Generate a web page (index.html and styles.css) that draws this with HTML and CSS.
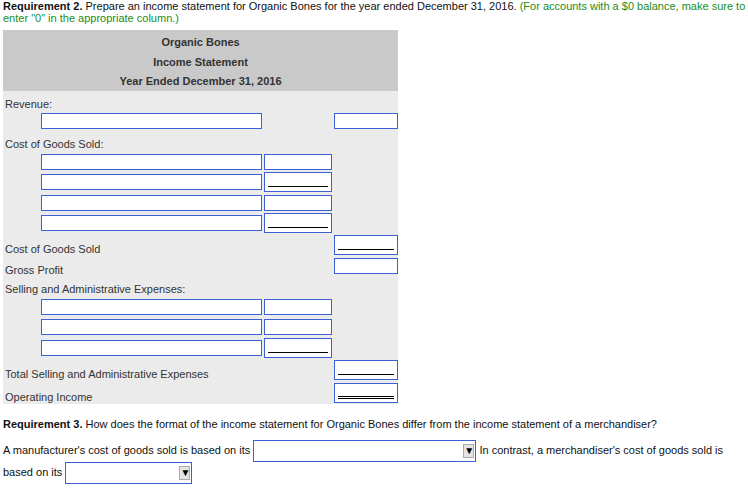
FILE: index.html
```html
<!DOCTYPE html>
<html lang="en">
<head>
    <meta charset="UTF-8">
    <title>Organic Bones - Income Statement</title>
    <link rel="stylesheet" href="styles.css">
</head>
<body>
    <p class="intro"><strong>Requirement 2.</strong> Prepare an income statement for Organic Bones for the year ended December 31, 2016. <span class="hint">(For accounts with a $0 balance, make sure to enter "0" in the appropriate column.)</span></p>

    <div class="statement">
        <div class="statement-head">
            <div>Organic Bones</div>
            <div>Income Statement</div>
            <div>Year Ended December 31, 2016</div>
        </div>
        <div class="statement-body">
            <div class="row label-row"><span class="label">Revenue:</span></div>
            <div class="row entry-row">
                <input class="field name">
                <span class="gap-col"></span>
                <input class="field total">
            </div>

            <div class="row label-row"><span class="label">Cost of Goods Sold:</span></div>
            <div class="row entry-row">
                <input class="field name">
                <input class="field amount">
            </div>
            <div class="row entry-row">
                <input class="field name">
                <input class="field amount underline">
            </div>
            <div class="row entry-row">
                <input class="field name">
                <input class="field amount">
            </div>
            <div class="row entry-row">
                <input class="field name">
                <input class="field amount underline">
            </div>
            <div class="row total-row">
                <span class="label">Cost of Goods Sold</span>
                <input class="field total underline">
            </div>
            <div class="row total-row plain">
                <span class="label">Gross Profit</span>
                <input class="field total">
            </div>

            <div class="row label-row"><span class="label">Selling and Administrative Expenses:</span></div>
            <div class="row entry-row">
                <input class="field name">
                <input class="field amount">
            </div>
            <div class="row entry-row">
                <input class="field name">
                <input class="field amount">
            </div>
            <div class="row entry-row">
                <input class="field name">
                <input class="field amount underline">
            </div>
            <div class="row total-row grand">
                <span class="label">Total Selling and Administrative Expenses</span>
                <input class="field total underline">
            </div>
            <div class="row total-row grand">
                <span class="label">Operating Income</span>
                <input class="field total double">
            </div>
        </div>
    </div>

    <p class="question"><strong>Requirement 3.</strong> How does the format of the income statement for Organic Bones differ from the income statement of a merchandiser?</p>

    <p class="answer">A manufacturer's cost of goods sold is based on its <span class="dropdown wide"><span class="arrow">&#9660;</span></span> In contrast, a merchandiser's cost of goods sold is based on its <span class="dropdown narrow"><span class="arrow">&#9660;</span></span></p>
</body>
</html>
```

FILE: styles.css
```css
body {
    margin: 0;
    padding: 0 0 0 3px;
    font-family: "Liberation Sans", Arial, sans-serif;
    font-size: 11px;
    color: #111;
}
p {
    margin: 0;
}
.intro {
    line-height: 12px;
}
.hint {
    color: #1a8c1a;
}
.statement {
    width: 395px;
    margin-top: 6px;
    background-color: #ebebeb;
}
.statement-head {
    background-color: #c9c9c9;
    padding-top: 3px;
    height: 58px;
    text-align: center;
    font-weight: bold;
    color: #333;
}
.statement-head div {
    height: 19.5px;
    line-height: 19.5px;
}
.statement-body {
    color: #333;
}
.row {
    display: flex;
    align-items: center;
    gap: 2px;
}
.label-row {
    height: 20px;
}
.entry-row {
    height: 20.5px;
    padding-left: 38px;
}
.total-row {
    height: 22px;
    justify-content: space-between;
}
.plain {
    height: 21px;
}
.grand {
    height: 23px;
}
.label {
    padding-left: 2px;
    padding-top: 8px;
}
.label-row .label {
    padding-top: 5px;
}
.field {
    box-sizing: border-box;
    height: 16px;
    margin: 0;
    padding: 0 3px;
    border: 1px solid #3c5fd4;
    background-color: #fff;
    font: inherit;
}
.name {
    width: 221px;
}
.amount {
    width: 68px;
}
.gap-col {
    width: 68px;
}
.total {
    width: 64px;
}
.underline {
    height: 20px;
    background-image: linear-gradient(#000, #000);
    background-repeat: no-repeat;
    background-size: calc(100% - 6px) 1px;
    background-position: 3px calc(100% - 4px);
}
.double {
    height: 20px;
    background-image: linear-gradient(#000, #000), linear-gradient(#000, #000);
    background-repeat: no-repeat;
    background-size: calc(100% - 6px) 1px, calc(100% - 6px) 1px;
    background-position: 3px calc(100% - 5px), 3px calc(100% - 3px);
}
.question {
    margin-top: 10px;
    line-height: 20px;
}
.answer {
    margin-top: 6px;
    line-height: 21px;
}
.dropdown {
    display: inline-block;
    box-sizing: border-box;
    height: 22px;
    vertical-align: middle;
    border: 1px solid #3c5fd4;
    background-color: #fff;
    position: relative;
}
.wide {
    width: 223px;
}
.narrow {
    width: 127px;
}
.arrow {
    position: absolute;
    right: 1px;
    top: 3px;
    width: 11px;
    height: 14px;
    box-sizing: border-box;
    border: 1px solid #aaa;
    background-color: #e4e4e4;
    font-size: 10px;
    line-height: 12px;
    text-align: center;
    color: #000;
}
```
